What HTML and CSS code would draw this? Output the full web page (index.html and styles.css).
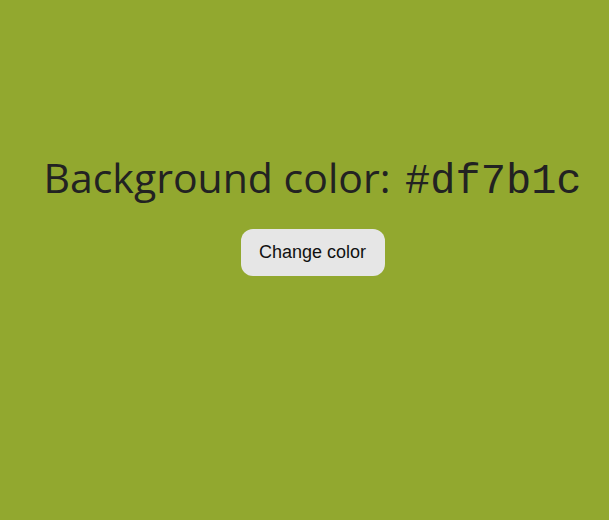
FILE: index.html
```html
<!DOCTYPE html>
<html>
<head>
<meta charset="utf-8">
<link rel="stylesheet" href="styles.css">
</head>
<body>
<main class="page">
  <h1 class="title">Background color: <code class="hex">#df7b1c</code></h1>
  <button class="btn">Change color</button>
</main>
</body>
</html>
```
FILE: styles.css
```css
html, body {
  margin: 0;
  height: 100%;
}
body {
  background: #92a82f;
  color: #222;
  font-family: "Open Sans", "Noto Sans", sans-serif;
}
.page {
  display: flex;
  flex-direction: column;
  align-items: center;
  padding-top: 149px;
  padding-left: 16px;
}
.title {
  margin: 0;
  font-weight: 400;
  font-size: 41px;
  line-height: 56px;
  white-space: nowrap;
}
.hex {
  font-family: "Liberation Mono", "Courier New", monospace;
  font-size: 42px;
  margin-left: 4px;
}
.btn {
  margin-top: 19px;
  width: 144px;
  height: 47px;
  border: none;
  border-radius: 12px;
  background: #e6e6e6;
  color: #111;
  font-family: "Liberation Sans", Arial, sans-serif;
  font-size: 18px;
}
```
